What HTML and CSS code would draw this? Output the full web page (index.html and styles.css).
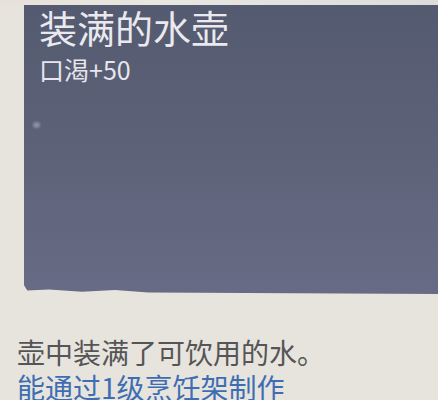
FILE: index.html
```html
<!DOCTYPE html>
<html lang="zh-CN">
<head>
<meta charset="utf-8">
<link rel="stylesheet" href="styles.css">
</head>
<body>
<div class="page">
  <div class="card">
    <span class="spot"></span>
    <div class="title">装满的水壶</div>
    <div class="stat">口渴+50</div>
  </div>
  <div class="desc">
    <p class="line">壶中装满了可饮用的水。</p>
    <p class="line link">能通过1级烹饪架制作</p>
  </div>
</div>
</body>
</html>
```
FILE: styles.css
```css
html, body {
  margin: 0;
  padding: 0;
  background: #e7e4dd;
}
body {
  width: 438px;
  height: 400px;
  overflow: hidden;
  font-family: "Noto Sans CJK SC", "Noto Sans", sans-serif;
}
.page {
  padding-top: 5px;
  background: linear-gradient(90deg, #e6e2da 0%, #e8e6e1 40%, #dcdcdc 100%) top / 100% 5px no-repeat;
}
.card {
  position: relative;
  margin-left: 24px;
  height: 289px;
  padding-left: 15px;
  box-sizing: border-box;
  background: linear-gradient(180deg, #545a70 0%, #5c6177 45%, #686b85 100%);
  clip-path: polygon(0 0, 100% 0, 100% 100%, 30% 99.5%, 22% 98.6%, 14% 99.2%, 6% 98.4%, 0.8% 98.8%, 0 97%);
}
.spot {
  position: absolute;
  left: 9px;
  top: 117px;
  width: 7px;
  height: 6px;
  border-radius: 50%;
  background: #8a8fa6;
  filter: blur(1px);
}
.title {
  font-size: 38px;
  line-height: 44px;
  color: #e9e9ee;
}
.stat {
  margin-top: 5px;
  font-size: 25px;
  line-height: 30px;
  color: #e6e6ec;
}
.desc {
  margin-top: 41px;
  padding-left: 17px;
}
.line {
  margin: 0;
  font-size: 28px;
  line-height: 35px;
  color: #555557;
  white-space: nowrap;
}
.link {
  color: #3e6db3;
}
```
